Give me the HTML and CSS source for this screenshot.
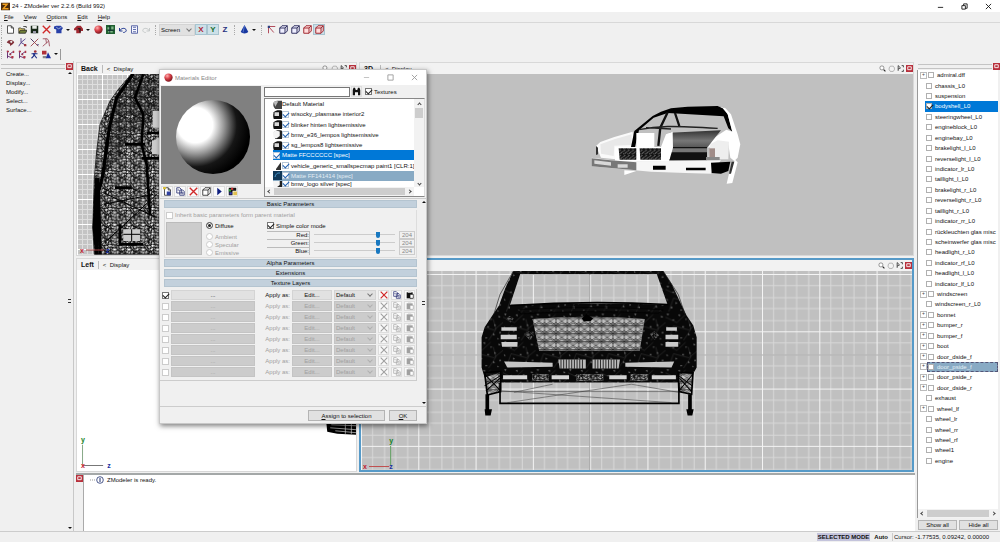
FILE: index.html
```html
<!DOCTYPE html>
<html lang="en">

<head>
	<meta charset="UTF-8">
	<meta name="viewport" content="width=device-width, initial-scale=1.0">
	<title>24 - ZModeler ver 2.2.6 (Build 992)</title>
	<link rel="stylesheet" href="styles.css">
</head>

<body>

	<!-- shared icons and mesh patterns -->
	<svg class="defs" aria-hidden="true">
		<defs>
			<radialGradient id="redBall" cx=".35" cy=".3" r=".7">
				<stop offset="0" stop-color="#ffb0b0" />
				<stop offset=".5" stop-color="#d84048" />
				<stop offset="1" stop-color="#801820" />
			</radialGradient>
			<radialGradient id="shine" cx=".26" cy=".34" r=".74">
				<stop offset=".32" stop-color="#fff" />
				<stop offset=".52" stop-color="#999" />
				<stop offset=".76" stop-color="#161616" />
				<stop offset="1" stop-color="#000" />
			</radialGradient>
			<linearGradient id="metal" x2="0" y2="1">
				<stop offset="0" stop-color="#333" />
				<stop offset=".6" stop-color="#777" />
				<stop offset="1" stop-color="#555" />
			</linearGradient>
			<pattern id="dense" width="97" height="83" patternUnits="userSpaceOnUse">
				<rect width="97" height="83" fill="#080808" />
				<path d="M4 3l7 2-5 3zM38 8l4-3 2 6zM60 18l4 2-3 3zM19 22l8-2-3 4zM72 34l4 5-5 1zM2 44l4-1 1 5zM30 52l5 3-4 3zM50 44l3-5 2 6zM84 10l6 3-6 2zM88 56l3 5-5 2zM14 68l6-3 0 6zM44 74l7 1-5 3zM66 66l4-4 2 6zM80 76l5 2-4 2z" fill="#8a8a8a" />
				<path d="M0 14L34 30 60 6M10 80L24 40 70 52 97 30M54 83L76 50 68 20" fill="none" stroke="#555" />
			</pattern>
			<pattern id="mesh" width="43" height="37" patternUnits="userSpaceOnUse">
				<path d="M0 6L11 2 18 9 29 3 43 6M0 16L9 12 20 18 31 11 43 16M0 27L12 22 22 29 33 21 43 27M0 34L15 36 27 32 43 34M4 0L7 14 3 24 8 37M14 0L11 12 17 24 13 37M24 0L20 10 26 20 22 37M34 0L37 11 31 23 36 37M0 2L15 14 26 20 43 35M42 2L30 12 16 24 0 36M11 2L20 18 12 22 22 37M29 3L31 23 43 20" fill="none" stroke="#000" stroke-width="2.4" />
			</pattern>
			<pattern id="plate" width="34" height="24" patternUnits="userSpaceOnUse">
				<path d="M0 5L8 9 17 4 26 10 34 5M0 17L9 13 17 18 25 14 34 17M0 0L17 12 34 24M34 0L17 12 0 24M17 0V24M0 12H34" fill="none" stroke="#111" stroke-width="1.7" />
			</pattern>
			<pattern id="grill" width="13" height="16" patternUnits="userSpaceOnUse">
				<rect width="13" height="16" fill="#111" />
				<path d="M1 5L7 0M4 13L12 6M0 14l2-2" stroke="#bbb" stroke-width="2" />
			</pattern>
			<pattern id="fineGrid" x="77" y="73" width="25" height="25" patternUnits="userSpaceOnUse">
				<path d="M5.500 0V25M10.500 0V25M15.500 0V25M20.500 0V25M0 5.500H25M0 10.500H25M0 15.500H25M0 20.500H25" stroke="#dedede" />
				<path d="M.5 0V25M0 .5H25" stroke="#fff" />
			</pattern>
			<pattern id="wideGrid" x="361" y="273" width="57" height="57" patternUnits="userSpaceOnUse">
				<path d="M11.500 0V57M23.500 0V57M34.500 0V57M46.500 0V57M0 11.500H57M0 23.500H57M0 34.500H57M0 46.500H57" stroke="#d8d8d8" />
				<path d="M.5 0V57M0 .5H57" stroke="#f4f4f4" />
			</pattern>
		</defs>
		<symbol id="i-app" viewBox="0 0 12 12"><path d="M0 1h12v10H0z" fill="#4a2c10" /><path d="M2 3h6L3 9h7" fill="none" stroke="#f0a020" stroke-width="2" /></symbol>
		<symbol id="i-new" viewBox="0 0 12 12"><path d="M2 1h5l3 3v7H2zM7 1v3h3" fill="#fff" stroke="#222" /></symbol>
		<symbol id="i-newmat" viewBox="0 0 12 12"><path d="M2 1h5l3 3v7H2zM7 1v3h3" fill="#fff" stroke="#222" /><path d="M5 6h5v5H5z" fill="#3040a0" /><path d="M0 0h4v3H0z" fill="#d8c040" /></symbol>
		<symbol id="i-open" viewBox="0 0 12 12"><path d="M1 10V4h3l1 1h4v5z" fill="#e8d060" stroke="#333" /><path d="M3 7h9l-2 4H1z" fill="#70803a" stroke="#222" /><path d="M7 2h4v2" fill="none" stroke="#222" /></symbol>
		<symbol id="i-save" viewBox="0 0 12 12"><path d="M1 1h10v10H1z" fill="#182818" /><path d="M3 1h6v4H3z" fill="#e8ece8" /><path d="M4 8h4v3H4z" fill="#99a" /></symbol>
		<symbol id="i-del" viewBox="0 0 12 12"><path d="M1 1l10 10M11 1L1 11" stroke="#d02828" stroke-width="1.800" /></symbol>
		<symbol id="i-import" viewBox="0 0 12 12"><path d="M0 2l3-1h6l3 3-2 3v4H3V6L0 5z" fill="#2840a8" /><path d="M3 3l3 2 4-2" stroke="#bcd" fill="none" /></symbol>
		<symbol id="i-export" viewBox="0 0 12 12"><path d="M0 5l4-4h5l3 4v3H9v3H3V7H0z" fill="#a02830" /><path d="M5 5h3v5" stroke="#111" stroke-width="1.500" fill="none" /></symbol>
		<symbol id="i-ball" viewBox="0 0 12 12"><circle cx="6" cy="6" r="5.500" fill="url(#redBall)" /></symbol>
		<symbol id="i-chip" viewBox="0 0 12 12"><path d="M0 0h12v12H0z" fill="#206030" /><path d="M2 3h3v3H2zM7 2h3v4H7zM3 8h6v2H3z" fill="#80b888" /><path d="M5 1v10M2 7h9" stroke="#123" /></symbol>
		<symbol id="i-undo" viewBox="0 0 12 12"><path d="M2 4v4h4M2 8c2-4 8-5 9-1 0 2-2 3-4 3" fill="none" stroke="#203890" stroke-width="1.300" /></symbol>
		<symbol id="i-redo" viewBox="0 0 12 12"><path d="M10 4v4H6M10 8C8 4 2 3 1 7c0 2 2 3 4 3" fill="none" stroke="#c4c8c8" stroke-width="1.300" /></symbol>
		<symbol id="i-log" viewBox="0 0 12 12"><path d="M2 1h8v10H2z" fill="#f4f6ff" stroke="#304090" /><path d="M4 3h4M4 6h4M4 9h4" stroke="#304090" /></symbol>
		<symbol id="i-cone" viewBox="0 0 12 12"><path d="M6 0l5 9c-2 3-8 3-10 0z" fill="#1838a0" /><path d="M6 1L4 10" stroke="#6888d8" /></symbol>
		<symbol id="i-axis" viewBox="0 0 12 12"><path d="M2 11V2h9M3 3l6 7" fill="none" stroke="#b04858" stroke-width="1.300" /><path d="M1 1h3v3H1z" fill="#304080" /></symbol>
		<symbol id="i-cube" viewBox="0 0 12 12"><path d="M1 4h7v7H1zM1 4l3-3h7L8 4M8 11l3-3V1" fill="#eef" stroke="#303060" stroke-width="1.300" /></symbol>
		<symbol id="i-cuber" viewBox="0 0 12 12"><path d="M1 4h7v7H1zM1 4l3-3h7L8 4M8 11l3-3V1" fill="#fdd" stroke="#a02830" stroke-width="1.300" /></symbol>
		<symbol id="i-cubeb" viewBox="0 0 12 12"><path d="M1 4h7v7H1zM1 4l3-3h7L8 4M8 11l3-3V1" fill="#fff" stroke="#111" /></symbol>
		<symbol id="i-eye" viewBox="0 0 12 12"><path d="M1 6c2-5 9-4 10 0-2 3-4 3-5 5L5 8z" fill="#803038" /><circle cx="7" cy="5" r="1.500" fill="#eee" /></symbol>
		<symbol id="i-tri" viewBox="0 0 12 12"><path d="M4 0v6L1 11M4 6l7 4M4 6l6-5" fill="none" stroke="#504088" stroke-width="1.200" /><path d="M8 8h3v3H8z" fill="#a03840" /></symbol>
		<symbol id="i-cut" viewBox="0 0 12 12"><path d="M1 1l10 10M11 1L1 11" fill="none" stroke="#984048" stroke-width="1.200" /><path d="M1 1l4 4M9 9h3" stroke="#303870" /></symbol>
		<symbol id="i-weld" viewBox="0 0 12 12"><path d="M1 1h6l2 3 1 7M9 4L1 11M5 1l1 6" fill="none" stroke="#a05060" stroke-width="1.200" /></symbol>
		<symbol id="i-man" viewBox="0 0 12 12"><circle cx="7" cy="2" r="1.800" fill="#a03038" /><path d="M7 4L5 8l-3 3M6 7l3 4M2 5h8M5 4v4" fill="none" stroke="#203088" stroke-width="1.500" /></symbol>
		<symbol id="i-dots" viewBox="0 0 12 12"><path d="M2 1v10M2 8l7 3M4 6l6-4" stroke="#405" fill="none" /><path d="M1 1h3v2H1zM5 5h2v2H5zM9 1h2v3H9zM7 8h3v3H7z" fill="#b03848" /></symbol>
		<symbol id="i-scene" viewBox="0 0 12 12"><path d="M0 1h6v5H0z" fill="#b03038" /><path d="M1 8h5v3H1z" fill="#888" /><path d="M8 3l4 8H5z" fill="#2030a0" /></symbol>
		<symbol id="i-copy" viewBox="0 0 12 12"><path d="M1 1h4l2 2v5H1zM5 4h4l2 2v5H5z" fill="#fff" stroke="currentColor" /><path d="M7 7h3M7 9h3M2 4h2" stroke="currentColor" /></symbol>
		<symbol id="i-paste" viewBox="0 0 12 12"><path d="M1 2h9v9H1z" fill="currentColor" /><path d="M3 1h5v2H3z" fill="#bbb" /><path d="M6 5h5v6H6z" fill="#fff" stroke="currentColor" /></symbol>
		<symbol id="i-x" viewBox="0 0 12 12"><path d="M1 1l10 10M11 1L1 11" stroke="currentColor" stroke-width="1.600" /></symbol>
		<symbol id="i-play" viewBox="0 0 12 12"><path d="M3 1l6 5-6 5z" fill="#102080" /></symbol>
		<symbol id="i-pal" viewBox="0 0 12 12"><path d="M1 1h10v4H6v6H1z" fill="#111" /><path d="M1 3h3v3H1z" fill="#30a040" /><path d="M4 1h3v3H4z" fill="#c03030" /><path d="M7 6h5v5H7z" fill="#e0c050" /><path d="M2 7h3v3H2z" fill="#3040c0" /></symbol>
		<symbol id="i-find" viewBox="0 0 12 12"><path d="M1 11V4l1-3h2l1 3h2l1-3h2l1 3v7H8V7H4v4z" fill="#111" /></symbol>
		<symbol id="i-gray" viewBox="0 0 12 12"><path d="M1 3c3-3 7-2 11-2v11H3C0 9 0 6 1 3z" fill="#444" /><path d="M1 3c2-2 4-2 6-1L3 9z" fill="#bbb" /></symbol>
		<symbol id="i-swatch" viewBox="0 0 12 12"><path d="M1 3c3-3 7-3 11-2v11H1C0 9 0 6 1 3z" fill="#111" /><path d="M2 3h6v5H2z" fill="#d8d8d8" /></symbol>
		<symbol id="i-pale" viewBox="0 0 12 12"><path d="M1 3c3-3 7-3 11-2v11H3z" fill="#222" /><path d="M0 3c3-3 6-2 9-1v6l-4 3H1z" fill="#f4f4f4" /></symbol>
		<symbol id="i-zoom" viewBox="0 0 12 12"><circle cx="5" cy="5" r="3.500" fill="#fff" stroke="#555" /><path d="M8 8l3 3" stroke="#222" stroke-width="2" /></symbol>
		<symbol id="i-hand" viewBox="0 0 12 12"><path d="M2 5l2-3h5l2 3v3l-2 3H4L2 8z" fill="#f4f4f4" stroke="#888" /></symbol>
		<symbol id="i-fit" viewBox="0 0 12 12"><path d="M2 1v9M2 1l4 4-4 2M8 1h3v3M8 11h3V8" fill="none" stroke="#222" stroke-width="1.300" /></symbol>
		<symbol id="i-close" viewBox="0 0 12 12"><path d="M0 0h12v12H0z" fill="#b8303c" /><path d="M3 3h6v5H3z" fill="none" stroke="#fff" stroke-width="1.500" /></symbol>
	</svg>

	<header class="titlebar">
		<svg class="icon"><use href="#i-app" /></svg>
		<h1>24 - ZModeler ver 2.2.6 (Build 992)</h1>
		<div class="win-buttons">
			<button type="button" aria-label="Minimize"><svg viewBox="0 0 8 8"><path d="M1 5h6" stroke="#111" /></svg></button>
			<button type="button" aria-label="Restore"><svg viewBox="0 0 8 8"><path d="M1 3h4v4H1zM3 3V1h4v5H5" fill="none" stroke="#111" /></svg></button>
			<button type="button" aria-label="Close"><svg viewBox="0 0 8 8"><path d="M1 1l6 6M7 1L1 7" stroke="#111" /></svg></button>
		</div>
	</header>

	<nav class="menubar">
		<a href="#"><u>F</u>ile</a>
		<a href="#"><u>V</u>iew</a>
		<a href="#"><u>O</u>ptions</a>
		<a href="#"><u>E</u>dit</a>
		<a href="#"><u>H</u>elp</a>
	</nav>

	<div class="toolbars">
		<div class="toolbar">
			<span class="grip"></span>
			<button type="button" aria-label="New"><svg class="icon"><use href="#i-new" /></svg></button>
			<button type="button" aria-label="Open"><svg class="icon"><use href="#i-open" /></svg></button>
			<button type="button" aria-label="Save"><svg class="icon"><use href="#i-save" /></svg></button>
			<button type="button" aria-label="Delete"><svg class="icon"><use href="#i-del" /></svg></button>
			<button type="button" aria-label="Import"><svg class="icon"><use href="#i-import" /></svg></button>
			<button type="button" class="drop" aria-label="Import options"></button>
			<button type="button" aria-label="Export"><svg class="icon"><use href="#i-export" /></svg></button>
			<button type="button" class="drop" aria-label="Export options"></button>
			<button type="button" aria-label="Materials"><svg class="icon"><use href="#i-ball" /></svg></button>
			<button type="button" aria-label="Textures"><svg class="icon"><use href="#i-chip" /></svg></button>
			<button type="button" aria-label="Undo"><svg class="icon"><use href="#i-undo" /></svg></button>
			<button type="button" aria-label="History"><svg class="icon"><use href="#i-log" /></svg></button>
			<button type="button" aria-label="Redo"><svg class="icon"><use href="#i-redo" /></svg></button>
			<span class="grip first"></span>
			<span class="select space">
				<select aria-label="Coordinate space">
					<option>Screen</option>
				</select>
			</span>
			<button type="button" class="axis red on">X</button>
			<button type="button" class="axis green on">Y</button>
			<button type="button" class="axis blue">Z</button>
			<span class="grip"></span>
			<button type="button" aria-label="Primitive"><svg class="icon"><use href="#i-cone" /></svg></button>
			<button type="button" class="drop" aria-label="Primitive options"></button>
			<span class="grip"></span>
			<button type="button" aria-label="Vertices"><svg class="icon"><use href="#i-axis" /></svg></button>
			<button type="button" aria-label="Edges"><svg class="icon"><use href="#i-cube" /></svg></button>
			<button type="button" aria-label="Faces"><svg class="icon"><use href="#i-cube" /></svg></button>
			<button type="button" aria-label="Polygons"><svg class="icon"><use href="#i-cuber" /></svg></button>
			<button type="button" class="on" aria-label="Objects"><svg class="icon"><use href="#i-cuber" /></svg></button>
		</div>
		<div class="toolbar">
			<span class="grip"></span>
			<button type="button" aria-label="Show"><svg class="icon"><use href="#i-eye" /></svg></button>
			<button type="button" aria-label="Local axes"><svg class="icon"><use href="#i-tri" /></svg></button>
			<button type="button" aria-label="Cut"><svg class="icon"><use href="#i-cut" /></svg></button>
			<button type="button" aria-label="Weld"><svg class="icon"><use href="#i-weld" /></svg></button>
		</div>
		<div class="toolbar">
			<span class="grip"></span>
			<button type="button" aria-label="Bones"><svg class="icon"><use href="#i-dots" /></svg></button>
			<button type="button" aria-label="Weights"><svg class="icon"><use href="#i-dots" /></svg></button>
			<button type="button" aria-label="Pose"><svg class="icon"><use href="#i-man" /></svg></button>
			<button type="button" aria-label="Scene"><svg class="icon"><use href="#i-scene" /></svg></button>
			<button type="button" class="drop" aria-label="Scene options"></button>
			<span class="end"></span>
		</div>
	</div>

	<main class="workspace">
		<aside class="commands">
			<div class="dock-top">
				<button type="button" class="close" aria-label="Close commands"><svg class="icon"><use href="#i-close" /></svg></button>
			</div>
			<div class="commands-body">
				<nav>
					<a href="#">Create...</a>
					<a href="#">Display...</a>
					<a href="#">Modify...</a>
					<a href="#">Select...</a>
					<a href="#">Surface...</a>
				</nav>
				<div class="steps">
					<span class="up"></span>
					<span class="thumb"></span>
					<span class="down"></span>
				</div>
			</div>
		</aside>

		<div class="center">
			<div class="views">
				<section class="view">
					<div class="view-head">
						<b>Back</b>
						<button type="button" class="display">&lt;&nbsp; Display</button>
						<span class="view-tools"><svg class="icon"><use href="#i-zoom" /></svg><svg class="icon"><use href="#i-hand" /></svg><svg class="icon"><use href="#i-fit" /></svg><svg class="icon"><use href="#i-close" /></svg></span>
					</div>
					<svg class="canvas" viewBox="77 73 279 181" preserveAspectRatio="xMinYMin slice">
						<rect x="77" y="73" width="279" height="185" fill="#c4c4c4" />
						<rect x="77" y="73" width="279" height="185" fill="url(#fineGrid)" />
						<g transform="translate(0 60) scale(.3333)">
							<path d="M395 38H500V580H283L278 500 283 350 290 270 300 190 330 120 355 85Z" fill="url(#mesh)" stroke="#000" stroke-width="2" />
							<path d="M395 38H500V200L420 180 350 300 306 345 340 140Z" fill="url(#plate)" />
							<path d="M400 38L350 110 328 200 308 345 296 390 300 580" fill="none" stroke="#000" stroke-width="10" />
							<path d="M285 350l14 0-4 230h-10l-7-80 4-90z" />
							<path d="M430 40L405 110 430 160 425 250 440 310 450 460M345 380h50M375 250h60M425 292h55M440 216h40M360 490v60h70" fill="none" stroke="#000" stroke-width="8" />
							<path d="M458 150h20v50h-20zM456 240l22-10v50h-22zM370 505h50v35h-50z" fill="#ccc" />
							<path d="M310 395L470 470M312 430L460 400M320 540L470 400M370 520h50M395 505v35" fill="none" stroke="#000" stroke-width="3" />
						</g>
						<text class="red" x="80" y="252">x</text>
						<path d="M86 249h18" stroke="#a04040" />
						<text class="blue" x="106" y="252">z</text>
					</svg>
				</section>

				<section class="view">
					<div class="view-head">
						<b>3D</b>
						<button type="button" class="display">&lt;&nbsp; Display</button>
						<span class="view-tools"><svg class="icon"><use href="#i-zoom" /></svg><svg class="icon"><use href="#i-hand" /></svg><svg class="icon"><use href="#i-fit" /></svg><svg class="icon"><use href="#i-close" /></svg></span>
					</div>
					<svg class="canvas" viewBox="359 73 554 181" preserveAspectRatio="xMinYMin slice">
						<rect x="359" y="73" width="554" height="185" fill="#c0c0c0" />
						<g transform="translate(570 90) scale(.3333)">
							<path d="M75 165L88 153 130 138 185 122 190 168H135V205L90 200Z" fill="#fafafa" />
							<path d="M88 160L130 145 182 130 182 162 130 164 128 195 90 188Z" fill="#e8e8e8" />
							<path d="M190 120L245 75 270 62 300 52 350 47 440 45 460 50 470 70 484 122 472 112 458 76 330 68 290 66 248 80 204 118 192 168H180Z" />
							<path d="M290 64L268 110 262 165M312 66L325 105" fill="none" stroke="#111" stroke-width="7" />
							<path d="M204 116C260 104 300 104 440 112M225 110L300 114" fill="none" stroke="#222" stroke-width="4" />
							<path d="M440 45L462 50 480 70 500 130 508 160 500 200 490 210 478 200 472 160 410 170 430 140 466 116 484 122 470 70 455 52Z" fill="#fff" />
							<path d="M296 125L450 118 408 170H300Z" fill="url(#metal)" />
							<path d="M292 168H408V208H292Z" fill="#111" />
							<path d="M292 172H408V184H292Z" fill="#777" />
							<path d="M196 126H250V168H196ZM285 130L305 122 306 170 296 205H270V168Z" fill="#fff" />
							<path d="M132 168H272L300 175 294 212H132Z" fill="#fff" />
							<path d="M143 172H196V206H146ZM206 172H270V206H208Z" fill="url(#grill)" />
							<path d="M418 160L440 148 474 152 472 205H412Z" fill="#eee" />
							<path d="M415 172H432V202H415Z" fill="#a08c88" />
							<path d="M405 198H446V208H405Z" fill="#888" />
							<path d="M62 200L160 212 450 208 420 248 345 246 240 242 62 226Z" fill="#f6f6f6" />
							<path d="M62 202L118 208 196 214V238L62 226Z" fill="#777" />
							<path d="M70 208l50 6v10l-50-6zM140 220h30v10h-30z" fill="#d8d8d8" />
							<path d="M246 224H284V236H246ZM345 230H404V238H345ZM420 215L478 212 472 240 450 248 422 246Z" />
							<path d="M160 238L196 240 160 252ZM492 206L500 214 484 276 467 278 474 248Z" fill="#fff" />
							<path d="M482 212l8 0-10 36h-6zM75 165l6 5v20l-6 2z" fill="#333" />
						</g>
					</svg>
				</section>

				<section class="view">
					<div class="view-head">
						<b>Left</b>
						<button type="button" class="display">&lt;&nbsp; Display</button>
					</div>
					<svg class="canvas" viewBox="77 270 279 200" preserveAspectRatio="xMinYMax slice">
						<rect x="77" y="266" width="279" height="204" fill="#fff" />
						<path d="M325 421h31v13l-20-1-10-2z" />
						<path d="M330 424l26 1M329 427l27 2M334 430l22 2M344 421v12M350 421v12" stroke="#ccc" stroke-width=".7" />
						<path d="M82.500 444v20" stroke="#88a888" />
						<path d="M83 464.500h20" stroke="#777" />
						<text class="green" x="81" y="441">y</text>
						<text class="red" x="81" y="467">x</text>
						<text class="blue" x="107" y="467">z</text>
					</svg>
				</section>

				<section class="view active">
					<div class="view-head">
						<b>Front</b>
						<button type="button" class="display">&lt;&nbsp; Display</button>
						<span class="view-tools"><svg class="icon"><use href="#i-zoom" /></svg><svg class="icon"><use href="#i-hand" /></svg><svg class="icon"><use href="#i-fit" /></svg><svg class="icon"><use href="#i-close" /></svg></span>
					</div>
					<svg class="canvas" viewBox="361 270 550 198" preserveAspectRatio="xMinYMin slice">
						<rect x="361" y="270" width="550" height="202" fill="#c0c0c0" />
						<rect x="361" y="270" width="550" height="202" fill="url(#wideGrid)" />
						<path d="M361 353.500H911M588.500 270V468" stroke="#aaa" />
						<g transform="translate(470 256) scale(.3333)">
							<path fill-rule="evenodd" d="M128 42H575L600 80 628 140 645 175 665 205 675 240V330L664 350 625 345 620 375H90L88 345 42 360 33 330V240L42 210 65 175 85 145 105 90ZM148 52L118 143 250 140 460 140 588 142 556 52Z" fill="url(#dense)" />
							<path d="M128 42L88 112 70 170M575 42L620 112 640 170" fill="none" stroke="#222" stroke-width="2" />
							<path d="M120 145Q350 130 590 142" fill="none" stroke="#000" stroke-width="5" />
							<path d="M140 158Q350 144 575 158L560 168Q350 158 150 170Z" fill="url(#plate)" stroke="#000" stroke-width="2" />
							<path d="M185 185Q350 172 520 185L505 280H205Z" fill="#bdbdbd" />
							<path d="M185 185Q350 172 520 185L505 280H205Z" fill="url(#plate)" />
							<path d="M332 184l14-14 20 14-8 8h-20z" />
							<path d="M92 210h46v10H92zM90 232h48v14H90zM92 254h48v14H94zM584 210h32v10h-32zM582 232h38v14h-38zM582 254h38v14h-38z" fill="#ccc" />
							<path d="M105 184l12-8 12 8-10 12zM160 230l14-8 16 12-14 14zM535 230l14-8 14 12-14 14z" fill="#666" />
							<path d="M105 184l12-8 12 8-10 12zM160 230l14-8 16 12-14 14zM535 230l14-8 14 12-14 14z" fill="url(#mesh)" />
							<path d="M100 312L245 316V328L110 330ZM462 316L608 312 600 330 462 328Z" fill="#c4c4c4" />
							<path d="M262 306H344V333H266ZM364 306H446L442 333H364Z" fill="#bbb" />
							<path d="M270 306v28M278 306v28M286 306v28M294 306v28M302 306v28M310 306v28M318 306v28M326 306v28M334 306v28M372 306v28M380 306v28M388 306v28M396 306v28M404 306v28M412 306v28M420 306v28M428 306v28M436 306v28" stroke="#111" stroke-width="2.500" />
							<path d="M97 353h72v12H97zM242 353h52v12h-52zM414 353h52v12h-52zM541 353h72v12h-72z" fill="#d4d4d4" />
							<path d="M184 350h50v20h-50zM316 350h80v20h-80zM478 350h52v20h-52z" fill="#aaa" />
							<path d="M184 350h50v20h-50zM316 350h80v20h-80zM478 350h52v20h-52z" fill="url(#mesh)" />
							<path d="M42 345L90 342 90 402 50 412ZM620 345L664 345 660 410 622 402Z" fill="url(#plate)" stroke="#000" stroke-width="5" />
							<path d="M42 350l48 50M42 385l46-30M664 350l-42 50M662 385l-40-30M46 400l44-40M660 402l-38-42" stroke="#000" stroke-width="3" />
							<path d="M88 376V437H622V376" fill="none" stroke="#000" stroke-width="5" />
							<path d="M92 402H620M110 435L480 380M92 400L600 435M130 404L245 380M480 380L620 404" fill="none" stroke="#333" stroke-width="1.500" />
							<path d="M50 410V460M655 410V460" stroke="#000" stroke-width="11" />
							<path d="M42 455h22l-4 18H44zM644 455h22l-4 18H648z" />
						</g>
						<path d="M390.500 444v20" stroke="#60a060" />
						<path d="M369 464.500h20" stroke="#c05050" />
						<text class="green" x="389" y="441">y</text>
						<text class="red" x="363" y="467">x</text>
						<text class="blue" x="389" y="467">z</text>
					</svg>
				</section>
			</div>

			<section class="log">
				<div class="log-dock">
					<button type="button" class="close" aria-label="Close log"><svg class="icon"><use href="#i-close" /></svg></button>
				</div>
				<p><svg class="info" viewBox="0 0 14 8"><path d="M0 4h6" stroke="#999" stroke-dasharray="1 1" /><circle cx="10" cy="4" r="3.300" fill="#fff" stroke="#203070" stroke-width=".8" /><path d="M10 2v4" stroke="#203070" /></svg>ZModeler is ready.</p>
			</section>
		</div>

		<aside class="nodes">
			<div class="dock-top">
				<button type="button" class="close" aria-label="Close nodes"><svg class="icon"><use href="#i-close" /></svg></button>
			</div>
			<div class="tree-box">
				<ul class="tree">
					<li class="parent"><label><input type="checkbox"><span>admiral.dff</span></label></li>
					<li><label><input type="checkbox"><span>chassis_L0</span></label></li>
					<li><label><input type="checkbox"><span>suspension</span></label></li>
					<li class="selected"><label><input type="checkbox" checked><span>bodyshell_L0</span></label></li>
					<li><label><input type="checkbox"><span>steeringwheel_L0</span></label></li>
					<li><label><input type="checkbox"><span>engineblock_L0</span></label></li>
					<li><label><input type="checkbox"><span>enginebay_L0</span></label></li>
					<li><label><input type="checkbox"><span>brakelight_l_L0</span></label></li>
					<li><label><input type="checkbox"><span>reverselight_l_L0</span></label></li>
					<li><label><input type="checkbox"><span>indicator_lr_L0</span></label></li>
					<li><label><input type="checkbox"><span>taillight_l_L0</span></label></li>
					<li><label><input type="checkbox"><span>brakelight_r_L0</span></label></li>
					<li><label><input type="checkbox"><span>reverselight_r_L0</span></label></li>
					<li><label><input type="checkbox"><span>taillight_r_L0</span></label></li>
					<li><label><input type="checkbox"><span>indicator_rr_L0</span></label></li>
					<li><label><input type="checkbox"><span>rückleuchten glas misc</span></label></li>
					<li><label><input type="checkbox"><span>scheinwerfer glas misc</span></label></li>
					<li><label><input type="checkbox"><span>headlight_r_L0</span></label></li>
					<li><label><input type="checkbox"><span>indicator_rf_L0</span></label></li>
					<li><label><input type="checkbox"><span>headlight_l_L0</span></label></li>
					<li><label><input type="checkbox"><span>indicator_lf_L0</span></label></li>
					<li class="parent"><label><input type="checkbox"><span>windscreen</span></label></li>
					<li><label><input type="checkbox"><span>windscreen_r_L0</span></label></li>
					<li class="parent"><label><input type="checkbox"><span>bonnet</span></label></li>
					<li class="parent"><label><input type="checkbox"><span>bumper_r</span></label></li>
					<li class="parent"><label><input type="checkbox"><span>bumper_f</span></label></li>
					<li class="parent"><label><input type="checkbox"><span>boot</span></label></li>
					<li class="parent"><label><input type="checkbox"><span>door_dside_f</span></label></li>
					<li class="parent focused"><label><input type="checkbox"><span>door_pside_f</span></label></li>
					<li class="parent"><label><input type="checkbox"><span>door_pside_r</span></label></li>
					<li class="parent"><label><input type="checkbox"><span>door_dside_r</span></label></li>
					<li><label><input type="checkbox"><span>exhaust</span></label></li>
					<li class="parent"><label><input type="checkbox"><span>wheel_lf</span></label></li>
					<li><label><input type="checkbox"><span>wheel_lr</span></label></li>
					<li><label><input type="checkbox"><span>wheel_rr</span></label></li>
					<li><label><input type="checkbox"><span>wheel_rf</span></label></li>
					<li><label><input type="checkbox"><span>wheel1</span></label></li>
					<li><label><input type="checkbox"><span>engine</span></label></li>
				</ul>
				<div class="hscroll"><i class="left"></i><span></span><i class="right"></i></div>
			</div>
			<div class="node-buttons">
				<button type="button">Show all</button>
				<button type="button">Hide all</button>
			</div>
		</aside>
	</main>

	<footer class="statusbar">
		<b class="mode">SELECTED MODE</b>
		<b>Auto</b>
		<span class="cursor">Cursor: -1.77535, 0.09242, 0.00000</span>
	</footer>

	<!-- floating materials window -->
	<div class="dialog" role="dialog" aria-labelledby="dialogTitle">
		<div class="dialog-title">
			<svg class="icon"><use href="#i-ball" /></svg>
			<h2 id="dialogTitle">Materials Editor</h2>
			<div class="win-buttons">
				<button type="button" aria-label="Minimize"><svg viewBox="0 0 8 8"><path d="M1 4h6" stroke="#bbb" /></svg></button>
				<button type="button" aria-label="Maximize"><svg viewBox="0 0 8 8"><path d="M1 1h6v6H1z" fill="none" stroke="#999" /></svg></button>
				<button type="button" aria-label="Close"><svg viewBox="0 0 8 8"><path d="M1 1l6 6M7 1L1 7" stroke="#999" /></svg></button>
			</div>
		</div>

		<div class="dialog-top">
			<div class="preview">
				<svg class="sphere" viewBox="0 0 100 98"><circle cx="52" cy="51" r="37" fill="url(#shine)" /></svg>
				<div class="preview-tools">
					<button type="button" aria-label="New material"><svg class="icon"><use href="#i-newmat" /></svg></button>
					<button type="button" aria-label="Copy material"><svg class="icon navy"><use href="#i-copy" /></svg></button>
					<button type="button" aria-label="Delete material"><svg class="icon"><use href="#i-del" /></svg></button>
					<button type="button" aria-label="Preview shape"><svg class="icon"><use href="#i-cubeb" /></svg></button>
					<button type="button" aria-label="Animate"><svg class="icon"><use href="#i-play" /></svg></button>
					<button type="button" aria-label="Palette"><svg class="icon"><use href="#i-pal" /></svg></button>
				</div>
			</div>
			<div class="library">
				<div class="search">
					<input type="text" aria-label="Find material">
					<button type="button" aria-label="Find"><svg class="icon"><use href="#i-find" /></svg></button>
					<label><input type="checkbox" checked>Textures</label>
				</div>
				<div class="list-box">
					<ul class="materials">
						<li><svg class="icon"><use href="#i-gray" /></svg>Default Material</li>
						<li><svg class="icon"><use href="#i-swatch" /></svg><label><input type="checkbox" checked>wisocky_plasmase interior2</label></li>
						<li><svg class="icon"><use href="#i-swatch" /></svg><label><input type="checkbox" checked>blinker hinten lightsemissive</label></li>
						<li><svg class="icon"><use href="#i-pale" /></svg><label><input type="checkbox" checked>bmw_e36_lempos lightsemissive</label></li>
						<li><svg class="icon"><use href="#i-swatch" /></svg><label><input type="checkbox" checked>sg_lempos8 lightsemissive</label></li>
						<li class="selected"><label><input type="checkbox" checked>Matte FFCCCCCC [spec]</label></li>
						<li><svg class="icon"><path d="M3 8L8 1v8H3z" fill="#333" /></svg><label><input type="checkbox" checked>vehicle_generic_smallspecmap paint1 [CLR:1]</label></li>
						<li class="focused"><svg class="icon"><path d="M0 0h9v9H0z" fill="#103858" /><path d="M2 6c1-4 3-4 5-4" stroke="#4898d0" fill="none" /></svg><label><input type="checkbox" checked>Matte FF141414 [spec]</label></li>
						<li><svg class="icon"><use href="#i-pale" /></svg><label><input type="checkbox" checked>bmw_logo silver [spec]</label></li>
					</ul>
					<div class="vscroll"><i class="up"></i><span></span><i class="down"></i></div>
					<div class="hscroll"><i class="left"></i><span></span><i class="right"></i></div>
				</div>
			</div>
		</div>

		<div class="params">
			<div class="groups">
				<h3>Basic Parameters</h3>
				<fieldset class="basic">
					<label class="inherit off"><input type="checkbox" disabled>Inherit basic parameters form parent material</label>
					<div class="color-box"></div>
					<div class="channels">
						<label><input type="radio" name="channel" checked>Diffuse</label>
						<label class="off"><input type="radio" name="channel">Ambient</label>
						<label class="off"><input type="radio" name="channel">Specular</label>
						<label class="off"><input type="radio" name="channel">Emissive</label>
					</div>
					<div class="colors">
						<label class="simple"><input type="checkbox" checked>Simple color mode</label>
						<label for="red">Red:</label><input type="range" id="red" max="255" value="204"><output for="red">204</output>
						<label for="green">Green:</label><input type="range" id="green" max="255" value="204"><output for="green">204</output>
						<label for="blue">Blue:</label><input type="range" id="blue" max="255" value="204"><output for="blue">204</output>
					</div>
				</fieldset>
				<h3>Alpha Parameters</h3>
				<h3>Extensions</h3>
				<h3>Texture Layers</h3>
				<div class="layers">
					<div class="layer">
						<input type="checkbox" aria-label="Layer 1" checked>
						<button type="button">...</button>
						<span>Apply as:</span>
						<button type="button">Edit...</button>
						<span class="select"><select aria-label="Layer 1 mode"><option>Default</option></select></span>
						<button type="button" class="tool" aria-label="Remove"><svg class="icon"><use href="#i-del" /></svg></button>
						<button type="button" class="tool" aria-label="Copy"><svg class="icon navy"><use href="#i-copy" /></svg></button>
						<button type="button" class="tool" aria-label="Paste"><svg class="icon"><use href="#i-paste" /></svg></button>
					</div>
					<div class="layer off">
						<input type="checkbox" aria-label="Layer 2">
						<button type="button">...</button>
						<span>Apply as:</span>
						<button type="button">Edit...</button>
						<span class="select"><select aria-label="Layer 2 mode"><option>Default</option></select></span>
						<button type="button" class="tool" aria-label="Remove"><svg class="icon"><use href="#i-x" /></svg></button>
						<button type="button" class="tool" aria-label="Copy"><svg class="icon"><use href="#i-copy" /></svg></button>
						<button type="button" class="tool" aria-label="Paste"><svg class="icon"><use href="#i-paste" /></svg></button>
					</div>
					<div class="layer off">
						<input type="checkbox" aria-label="Layer 3">
						<button type="button">...</button>
						<span>Apply as:</span>
						<button type="button">Edit...</button>
						<span class="select"><select aria-label="Layer 3 mode"><option>Default</option></select></span>
						<button type="button" class="tool" aria-label="Remove"><svg class="icon"><use href="#i-x" /></svg></button>
						<button type="button" class="tool" aria-label="Copy"><svg class="icon"><use href="#i-copy" /></svg></button>
						<button type="button" class="tool" aria-label="Paste"><svg class="icon"><use href="#i-paste" /></svg></button>
					</div>
					<div class="layer off">
						<input type="checkbox" aria-label="Layer 4">
						<button type="button">...</button>
						<span>Apply as:</span>
						<button type="button">Edit...</button>
						<span class="select"><select aria-label="Layer 4 mode"><option>Default</option></select></span>
						<button type="button" class="tool" aria-label="Remove"><svg class="icon"><use href="#i-x" /></svg></button>
						<button type="button" class="tool" aria-label="Copy"><svg class="icon"><use href="#i-copy" /></svg></button>
						<button type="button" class="tool" aria-label="Paste"><svg class="icon"><use href="#i-paste" /></svg></button>
					</div>
					<div class="layer off">
						<input type="checkbox" aria-label="Layer 5">
						<button type="button">...</button>
						<span>Apply as:</span>
						<button type="button">Edit...</button>
						<span class="select"><select aria-label="Layer 5 mode"><option>Default</option></select></span>
						<button type="button" class="tool" aria-label="Remove"><svg class="icon"><use href="#i-x" /></svg></button>
						<button type="button" class="tool" aria-label="Copy"><svg class="icon"><use href="#i-copy" /></svg></button>
						<button type="button" class="tool" aria-label="Paste"><svg class="icon"><use href="#i-paste" /></svg></button>
					</div>
					<div class="layer off">
						<input type="checkbox" aria-label="Layer 6">
						<button type="button">...</button>
						<span>Apply as:</span>
						<button type="button">Edit...</button>
						<span class="select"><select aria-label="Layer 6 mode"><option>Default</option></select></span>
						<button type="button" class="tool" aria-label="Remove"><svg class="icon"><use href="#i-x" /></svg></button>
						<button type="button" class="tool" aria-label="Copy"><svg class="icon"><use href="#i-copy" /></svg></button>
						<button type="button" class="tool" aria-label="Paste"><svg class="icon"><use href="#i-paste" /></svg></button>
					</div>
					<div class="layer off">
						<input type="checkbox" aria-label="Layer 7">
						<button type="button">...</button>
						<span>Apply as:</span>
						<button type="button">Edit...</button>
						<span class="select"><select aria-label="Layer 7 mode"><option>Default</option></select></span>
						<button type="button" class="tool" aria-label="Remove"><svg class="icon"><use href="#i-x" /></svg></button>
						<button type="button" class="tool" aria-label="Copy"><svg class="icon"><use href="#i-copy" /></svg></button>
						<button type="button" class="tool" aria-label="Paste"><svg class="icon"><use href="#i-paste" /></svg></button>
					</div>
					<div class="layer off">
						<input type="checkbox" aria-label="Layer 8">
						<button type="button">...</button>
						<span>Apply as:</span>
						<button type="button">Edit...</button>
						<span class="select"><select aria-label="Layer 8 mode"><option>Default</option></select></span>
						<button type="button" class="tool" aria-label="Remove"><svg class="icon"><use href="#i-x" /></svg></button>
						<button type="button" class="tool" aria-label="Copy"><svg class="icon"><use href="#i-copy" /></svg></button>
						<button type="button" class="tool" aria-label="Paste"><svg class="icon"><use href="#i-paste" /></svg></button>
					</div>
				</div>
			</div>
			<div class="steps">
				<span class="up"></span>
				<span class="thumb"></span>
				<span class="down"></span>
			</div>
		</div>

		<div class="dialog-buttons">
			<button type="button"><u>A</u>ssign to selection</button>
			<button type="button" class="ok"><u>O</u>K</button>
		</div>
	</div>

</body>

</html>
```

FILE: styles.css
```css
* {
	box-sizing: border-box;
}

body {
	display: flex;
	flex-direction: column;
	height: 100vh;
	margin: 0;
	overflow: hidden;
	background-color: #f0f0f0;
	color: #111;
	font-family: "Liberation Sans", Arial, sans-serif;
	font-size: 6px;
	line-height: 8px;
}

h1,
h2,
h3,
p,
ul {
	margin: 0;
	padding: 0;
	font-size: 6px;
	font-weight: normal;
	list-style: none;
}

a {
	color: inherit;
	text-decoration: none;
}

button,
input,
select {
	margin: 0;
	padding: 0;
	border: none;
	background: none;
	color: inherit;
	font: inherit;
}

button {
	display: flex;
	align-items: center;
	justify-content: center;
}

label {
	display: flex;
	align-items: center;
	gap: 2px;
	white-space: nowrap;
}

.defs {
	position: absolute;
	width: 0;
	height: 0;
}

.icon {
	flex: none;
	width: 9px;
	height: 9px;
}

.navy {
	color: #182068;
}

.red {
	fill: #c02030;
	color: #b02838;
}

.green {
	fill: #108020;
	color: #207030;
}

.blue {
	fill: #2030a0;
	color: #283080;
}

input[type="checkbox"] {
	appearance: none;
	flex: none;
	width: 7px;
	height: 7px;
	border: 1px solid #777;
	background-color: #fff;
}

input[type="checkbox"]:checked::before {
	content: "";
	display: block;
	width: 5px;
	height: 3px;
	border-left: 1px solid #222;
	border-bottom: 1px solid #222;
	transform: rotate(-45deg);
}

.select {
	display: flex;
	align-items: center;
	background-color: #e1e1e1;
	border: 1px solid #d4d4d4;
}

.select select {
	appearance: none;
	flex: 1;
	min-width: 0;
	padding-left: 1px;
}

.select::after {
	content: "";
	width: 3px;
	height: 3px;
	margin: 0 3px 2px 0;
	border-right: 1px solid #777;
	border-bottom: 1px solid #777;
	transform: rotate(45deg);
}

/* title and menu */

.titlebar {
	display: flex;
	align-items: center;
	gap: 2px;
	height: 12px;
	padding-left: 1px;
	background-color: #fff;
}

.win-buttons {
	display: flex;
	margin-left: auto;
}

.win-buttons button {
	width: 24px;
}

.win-buttons svg {
	width: 7px;
	height: 7px;
}

.menubar {
	display: flex;
	gap: 10px;
	height: 11px;
	padding: 1px 4px;
	border-bottom: 1px solid #d8d8d8;
}

/* toolbars */

.toolbars {
	height: 38px;
}

.toolbar {
	display: flex;
	align-items: center;
	height: 12px;
	padding-left: 0;
}

.toolbar:first-child {
	height: 13px;
}

.toolbar button {
	width: 12px;
	height: 11px;
}

.grip {
	width: 2px;
	height: 10px;
	margin: 0 1px;
	border-left: 1px dotted #aaa;
}

.toolbar .grip:not(:first-child) {
	margin: 0 2px 0 3px;
}

.toolbar .on {
	background-color: #cce0e8;
	border: 1px solid #a8c4d0;
}

.toolbar .axis {
	font-size: 8px;
	font-weight: bold;
}

.toolbar .drop {
	width: 8px;
}

.drop::before,
.steps .down {
	content: "";
	border: 2px solid transparent;
	border-top-color: #111;
	border-bottom: none;
}

.space {
	width: 36px;
	height: 12px;
}

.end {
	height: 11px;
	border-left: 1px solid #999;
}

/* workspace */

.workspace {
	display: flex;
	flex: 1;
	min-height: 0;
}

.commands {
	display: flex;
	flex-direction: column;
	width: 74px;
	padding-top: 1px;
	border-right: 1px solid #c8c8c8;
}

.dock-top {
	display: flex;
	align-items: center;
	height: 8px;
}

.dock-top::before {
	content: "";
	flex: 1;
	height: 3px;
	margin: 0 1px;
	border: solid #c4c4c4;
	border-width: 1px 0;
}

.close .icon,
.view-tools .icon {
	width: 7px;
	height: 7px;
}

.commands-body {
	display: flex;
	flex: 1;
	justify-content: space-between;
	padding-right: 1px;
}

.commands nav {
	display: flex;
	flex-direction: column;
	gap: 1px;
	padding: 0 6px;
}

.steps {
	display: flex;
	flex-direction: column;
	align-items: center;
	justify-content: space-between;
	width: 5px;
	padding: 2px 0;
}

.steps .up {
	border: 2px solid transparent;
	border-bottom-color: #111;
	border-top: none;
}

.steps .thumb {
	width: 3px;
	height: 4px;
	border: solid #333;
	border-width: 1px 0;
}

.center {
	display: flex;
	flex: 1;
	flex-direction: column;
	min-width: 0;
}

.views {
	display: grid;
	flex: 1;
	grid-template-columns: 281fr 555fr;
	grid-template-rows: 194fr 214fr;
	gap: 2px;
	min-height: 0;
	padding: 1px 2px 0 2px;
}

.view {
	display: flex;
	flex-direction: column;
	min-width: 0;
	min-height: 0;
	border: 1px solid #d8d8d8;
}

.view.active {
	border: 2px solid #569ac8;
}

.view-head {
	display: flex;
	align-items: center;
	height: 11px;
	background-color: #f2f2f2;
}

.view-head b {
	min-width: 21px;
	padding: 0 4px;
	border-right: 1px solid #bbb;
	font-size: 7px;
}

.display {
	padding: 0 4px;
}

.view-tools {
	display: flex;
	gap: 2px;
	margin-left: auto;
}

.canvas {
	flex: 1;
	width: 100%;
	min-height: 0;
}

.canvas text {
	font-size: 7px;
	font-weight: bold;
}

.log {
	display: flex;
	height: 58px;
	margin: 1px 1px 0 2px;
	border-top: 2px solid #a4a8a8;
	background-color: #fff;
}

.log-dock {
	width: 8px;
	border-right: 1px solid #aaa;
	background-color: #f0f0f0;
}

.log p {
	display: flex;
	align-items: flex-start;
	padding: 1px 6px;
}

.info {
	width: 14px;
	height: 8px;
	margin-right: 3px;
}

/* node tree */

.nodes {
	display: flex;
	flex-direction: column;
	width: 84px;
	padding: 1px 0 1px 1px;
}

.tree-box {
	display: flex;
	flex: 1;
	flex-direction: column;
	min-height: 0;
	margin-right: 2px;
	border-left: 1px solid #999;
	background-color: #fff;
}

.tree {
	display: grid;
	flex: 1;
	grid-auto-rows: 1fr;
	min-height: 0;
	padding-bottom: 43px;
	overflow: hidden;
}

.tree li {
	display: flex;
	align-items: center;
	min-height: 0;
	padding-left: 7px;
}

.tree .parent {
	padding-left: 2px;
}

.tree .parent::before {
	content: "+";
	width: 5px;
	height: 5px;
	border: 1px solid #bbb;
	color: #444;
	font-size: 5px;
	line-height: 3px;
	text-align: center;
}

.tree label {
	flex: 1;
	align-self: stretch;
	gap: 3px;
	padding-left: 1px;
}

.tree input[type="checkbox"] {
	width: 6px;
	height: 6px;
	border-color: #b0b0b0;
}

.selected label {
	background-color: #0078d7;
	color: #fff;
}

.focused label {
	background-color: #88aac4;
	color: #e4eef4;
}

.tree .focused label {
	outline: 1px dashed #557;
	outline-offset: -1px;
}

.hscroll {
	display: flex;
	align-items: center;
	justify-content: space-between;
	height: 9px;
	padding: 0 3px;
	background-color: #f2f2f2;
}

.hscroll span {
	flex: 1;
	height: 7px;
	margin: 0 3px;
	background-color: #cdcdcd;
}

.hscroll i,
.vscroll i {
	width: 3px;
	height: 3px;
	border: solid #444;
	border-width: 1px 0 0 1px;
}

.left {
	transform: rotate(-45deg);
}

.right {
	transform: rotate(135deg);
}

.vscroll .up {
	transform: rotate(45deg);
}

.vscroll .down {
	transform: rotate(225deg);
}

.node-buttons {
	display: flex;
	gap: 2px;
	padding: 2px 2px 0 1px;
}

.node-buttons button,
.dialog-buttons button {
	flex: 1;
	height: 10px;
	border: 1px solid #b4b4b4;
	background-color: #e1e1e1;
}

.statusbar {
	display: flex;
	align-items: center;
	justify-content: flex-end;
	gap: 4px;
	height: 11px;
	border-top: 1px solid #ccc;
}

.statusbar .mode {
	padding: 0 1px;
	background-color: #c4c4dc;
}

.statusbar .cursor {
	width: 108px;
	padding-left: 1px;
	border-left: 1px solid #ccc;
}

/* materials window */

.dialog {
	position: absolute;
	top: 69px;
	left: 159px;
	display: flex;
	flex-direction: column;
	width: 268px;
	height: 355px;
	border: 1px solid #c8c8c8;
	background-color: #f0f0f0;
	box-shadow: 1px 2px 5px rgba(0, 0, 0, 0.5);
}

.dialog-title {
	display: flex;
	align-items: center;
	gap: 2px;
	height: 15px;
	padding-left: 4px;
	background-color: #fff;
	color: #888;
}

.dialog-top {
	display: flex;
	gap: 3px;
	height: 113px;
	padding: 1px;
}

.preview {
	width: 100px;
}

.sphere {
	display: block;
	width: 100%;
	height: 98px;
	background-color: #808080;
}

.preview-tools {
	display: flex;
	gap: 1px;
	padding-top: 2px;
}

.preview-tools button {
	width: 12px;
	height: 11px;
	background-color: #fafafa;
	border: 1px solid #ddd;
}

.library {
	display: flex;
	flex: 1;
	flex-direction: column;
	gap: 1px;
	min-width: 0;
}

.search {
	display: flex;
	align-items: center;
	gap: 1px;
	height: 11px;
}

.search input[type="text"] {
	width: 86px;
	height: 10px;
	border: 1px solid #777;
	background-color: #fff;
}

.search button {
	width: 11px;
	height: 11px;
	margin-right: 2px;
	border: 1px solid #ddd;
}

.list-box {
	display: grid;
	flex: 1;
	grid-template-columns: 1fr 10px;
	grid-template-rows: 1fr 9px;
	min-height: 0;
	border: 1px solid #888;
	border-right-color: #ddd;
	background-color: #fff;
}

.materials {
	display: grid;
	grid-template-rows: repeat(8, 10fr) 6fr;
	min-width: 0;
	min-height: 0;
	padding-left: 8px;
	overflow: hidden;
}

.materials li {
	display: flex;
	align-items: center;
	min-width: 0;
	min-height: 0;
	overflow: hidden;
	white-space: nowrap;
}

.materials label {
	align-self: stretch;
	flex: 1;
}

.materials .focused {
	background-color: #88aac4;
}

.materials input[type="checkbox"] {
	border-color: #b8c8d8;
}

.materials input[type="checkbox"]:checked::before {
	border-color: #2060b0;
}

.vscroll {
	display: flex;
	flex-direction: column;
	align-items: center;
	justify-content: space-between;
	padding: 4px 0 2px;
	background-color: #f2f2f2;
}

.vscroll span {
	width: 8px;
	height: 10px;
	margin: 2px 0 auto;
	background-color: #cdcdcd;
}

.params {
	display: flex;
	flex: 1;
	min-height: 0;
	border: 1px solid #ccc;
	border-width: 1px 0;
}

.groups {
	flex: 1;
	padding: 1px 4px 0 4px;
}

h3 {
	height: 8px;
	margin-bottom: 2px;
	border: 1px solid #b4c4d0;
	background-color: #c2d0dc;
	line-height: 6px;
	text-align: center;
}

.basic {
	display: grid;
	grid-template-columns: 36px 48px 1fr;
	column-gap: 4px;
	min-width: 0;
	height: 48px;
	margin: 0 0 1px;
	padding: 0 1px;
	border: 1px solid #ddd;
	border-top: none;
}

.inherit {
	grid-column: 1 / -1;
	height: 10px;
}

.off {
	color: #a0a0a0;
}

.off input[type="checkbox"] {
	border-color: #ccc;
}

.color-box {
	height: 33px;
	margin-top: 1px;
	border: 1px solid #bbb;
	background-color: #ccc;
}

.channels {
	display: flex;
	flex-direction: column;
}

.channels label:first-child {
	margin: 1px 0 3px;
}

input[type="radio"] {
	appearance: none;
	width: 7px;
	height: 7px;
	border: 1px solid #666;
	border-radius: 50%;
	background-color: #fff;
}

.off input[type="radio"] {
	border-color: #ccc;
}

input[type="radio"]:checked {
	background-color: #222;
	box-shadow: inset 0 0 0 1px #fff;
}

.colors {
	display: grid;
	grid-template-columns: 43px 1fr 16px;
	grid-template-rows: 10px;
	grid-auto-rows: 8px;
	column-gap: 4px;
	padding-left: 9px;
}

.colors label {
	justify-content: flex-end;
	border: solid #bbb;
	border-width: 1px 1px 0 0;
}

.colors .simple {
	grid-column: 1 / -1;
	justify-content: flex-start;
	border: none;
}

.colors output {
	border: 1px solid #ccc;
	color: #888;
	line-height: 6px;
	text-align: center;
}

input[type="range"] {
	appearance: none;
	width: 100%;
	min-width: 0;
	height: 8px;
	background: linear-gradient(#ccc, #ccc) center / 100% 1px no-repeat;
}

input[type="range"]::-webkit-slider-thumb {
	appearance: none;
	width: 4px;
	height: 6px;
	border-radius: 0 0 2px 2px;
	background-color: #1878c0;
}

.layers {
	display: flex;
	flex-direction: column;
	gap: 1px;
	margin: 0 0 0 -4px;
	padding: 1px 1px 3px 2px;
	border: 1px solid #ccc;
	border-width: 0 1px 1px 0;
}

.layer {
	display: grid;
	grid-template-columns: 7px 84px 1fr 40px 42px 11px 11px 11px;
	gap: 2px;
	align-items: center;
	height: 10px;
}

.layer span:not(.select) {
	text-align: right;
	white-space: nowrap;
}

.layer button,
.layer .select {
	height: 10px;
	border: 1px solid #d4d4d4;
	background-color: #e1e1e1;
}

.layer.off button,
.layer.off .select {
	border-color: #c4c4c4;
	background-color: #ccc;
}

.layer.off .select::after {
	border-color: #b0b0b0;
}

.layer .tool,
.layer.off .tool {
	border-color: #ddd;
	background-color: #f8f8f8;
}

.layer .icon {
	width: 8px;
	height: 8px;
}

.dialog-buttons {
	display: flex;
	justify-content: flex-end;
	gap: 4px;
	padding: 3px 9px 2px;
}

.dialog-buttons button {
	flex: none;
	width: 77px;
	height: 11px;
}

.dialog-buttons .ok {
	width: 28px;
}
```
